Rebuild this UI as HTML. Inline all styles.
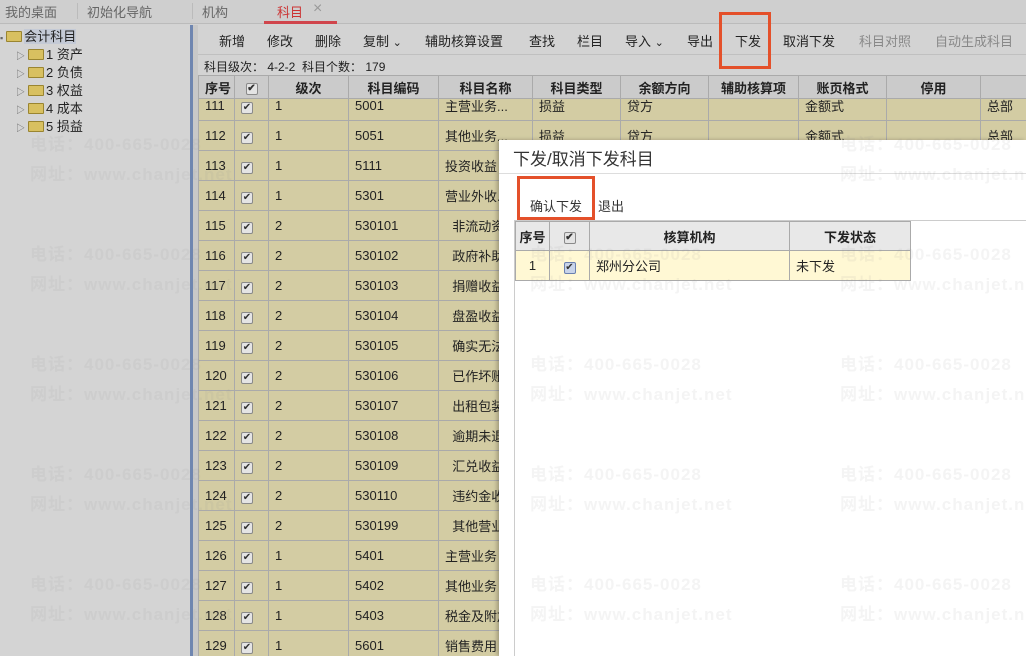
<!DOCTYPE html>
<html><head><meta charset="utf-8"><style>
*{margin:0;padding:0;box-sizing:border-box}
body{width:1026px;height:656px;overflow:hidden;position:relative;background:#d3d3d3;font-family:"Liberation Sans","Noto Sans CJK SC",sans-serif;font-size:13px;color:#222}
.a{position:absolute;white-space:nowrap}
.wm{position:absolute;color:rgba(150,150,150,.1);font-size:17px;font-weight:bold;white-space:nowrap;letter-spacing:1px}
.cb{display:inline-block;width:12px;height:12px;border:1px solid #8a8a8a;border-radius:2px;background:#e4e4e4;font-size:10px;line-height:10px;text-align:center;color:#333}
table{border-collapse:collapse;table-layout:fixed}
td{border:1px solid #aaa;height:30px;padding:0 6px;overflow:hidden;white-space:nowrap}
.hd td{background:#cbcbcb;font-weight:bold;text-align:center;height:23px}
.tb span{position:absolute;top:31px}
.fold{display:inline-block;width:16px;height:11px;background:#d8c060;border:1px solid #9a8530;border-radius:1px;vertical-align:-1px;margin-right:2px}
.tg{font-size:9px;color:#666;margin-right:3px}
</style></head><body>
<div class="a" style="left:0;top:0;width:1026px;height:24px;background:#cfcfcf;border-bottom:1px solid #bbb"></div>
<div class="a" style="left:5px;top:2px;color:#666">我的桌面</div>
<div class="a" style="left:77px;top:3px;width:1px;height:16px;background:#bbb"></div>
<div class="a" style="left:87px;top:2px;color:#666">初始化导航</div>
<div class="a" style="left:192px;top:3px;width:1px;height:16px;background:#bbb"></div>
<div class="a" style="left:202px;top:2px;color:#666">机构</div>
<div class="a" style="left:277px;top:2px;color:#c33">科目</div>
<div class="a" style="left:313px;top:0px;color:#999;font-size:16px">×</div>
<div class="a" style="left:264px;top:21px;width:73px;height:3px;background:#d0454c"></div>
<div class="a" style="left:0;top:25px;width:190px;height:631px;background:#d4d4d4"></div>
<div class="a" style="left:0;top:26px"><span class="tg">▪</span><span class="fold"></span><span style="background:#c4cad6">会计科目</span></div>
<div class="a" style="left:16px;top:44px"><span class="tg">▷</span><span class="fold"></span>1 资产</div>
<div class="a" style="left:16px;top:62px"><span class="tg">▷</span><span class="fold"></span>2 负债</div>
<div class="a" style="left:16px;top:80px"><span class="tg">▷</span><span class="fold"></span>3 权益</div>
<div class="a" style="left:16px;top:98px"><span class="tg">▷</span><span class="fold"></span>4 成本</div>
<div class="a" style="left:16px;top:116px"><span class="tg">▷</span><span class="fold"></span>5 损益</div>
<div class="a" style="left:190px;top:25px;width:3px;height:631px;background:#6f86b0"></div>
<div class="a" style="left:193px;top:25px;width:5px;height:631px;background:#c8c8c8"></div>
<div class="a" style="left:198px;top:25px;width:828px;height:30px;background:#d3d3d3;border-bottom:1px solid #c0c0c0"></div>
<div class="tb" style="font-size:13px">
<span style="left:219px">新增</span><span style="left:267px">修改</span><span style="left:315px">删除</span><span style="left:363px">复制 <small>⌄</small></span><span style="left:425px">辅助核算设置</span><span style="left:529px">查找</span><span style="left:577px">栏目</span><span style="left:625px">导入 <small>⌄</small></span><span style="left:687px">导出</span><span style="left:735px">下发</span><span style="left:783px">取消下发</span><span style="left:859px;color:#888">科目对照</span><span style="left:935px;color:#888">自动生成科目</span>
</div>
<div class="a" style="left:719px;top:12px;width:52px;height:57px;border:3px solid #e4502a"></div>
<div class="a" style="left:204px;top:58px;font-size:12px">科目级次： 4-2-2 &nbsp;科目个数： 179</div>
<div class="a" style="left:198px;top:75px;width:828px;height:581px;overflow:hidden;background:#d3cca3">
<table style="width:850px;position:absolute;top:0;left:0">
<colgroup><col style="width:36px"><col style="width:34px"><col style="width:80px"><col style="width:90px"><col style="width:94px"><col style="width:88px"><col style="width:88px"><col style="width:90px"><col style="width:88px"><col style="width:94px"><col style="width:68px"></colgroup>
<tr class="hd"><td>序号</td><td><span class="cb">✔</span></td><td>级次</td><td>科目编码</td><td>科目名称</td><td>科目类型</td><td>余额方向</td><td>辅助核算项</td><td>账页格式</td><td>停用</td><td></td></tr>
</table>
<div style="position:absolute;top:23px;left:0;height:558px;width:850px;overflow:hidden">
<table style="width:850px;position:absolute;top:-8px;left:0">
<colgroup><col style="width:36px"><col style="width:34px"><col style="width:80px"><col style="width:90px"><col style="width:94px"><col style="width:88px"><col style="width:88px"><col style="width:90px"><col style="width:88px"><col style="width:94px"><col style="width:68px"></colgroup>
<tr><td>111</td><td><span class="cb">✔</span></td><td>1</td><td>5001</td><td>主营业务...</td><td>损益</td><td>贷方</td><td></td><td>金额式</td><td></td><td>总部</td></tr>
<tr><td>112</td><td><span class="cb">✔</span></td><td>1</td><td>5051</td><td>其他业务...</td><td>损益</td><td>贷方</td><td></td><td>金额式</td><td></td><td>总部</td></tr>
<tr><td>113</td><td><span class="cb">✔</span></td><td>1</td><td>5111</td><td>投资收益</td><td></td><td></td><td></td><td></td><td></td><td></td></tr>
<tr><td>114</td><td><span class="cb">✔</span></td><td>1</td><td>5301</td><td>营业外收...</td><td></td><td></td><td></td><td></td><td></td><td></td></tr>
<tr><td>115</td><td><span class="cb">✔</span></td><td>2</td><td>530101</td><td>&nbsp;&nbsp;非流动资</td><td></td><td></td><td></td><td></td><td></td><td></td></tr>
<tr><td>116</td><td><span class="cb">✔</span></td><td>2</td><td>530102</td><td>&nbsp;&nbsp;政府补助</td><td></td><td></td><td></td><td></td><td></td><td></td></tr>
<tr><td>117</td><td><span class="cb">✔</span></td><td>2</td><td>530103</td><td>&nbsp;&nbsp;捐赠收益</td><td></td><td></td><td></td><td></td><td></td><td></td></tr>
<tr><td>118</td><td><span class="cb">✔</span></td><td>2</td><td>530104</td><td>&nbsp;&nbsp;盘盈收益</td><td></td><td></td><td></td><td></td><td></td><td></td></tr>
<tr><td>119</td><td><span class="cb">✔</span></td><td>2</td><td>530105</td><td>&nbsp;&nbsp;确实无法</td><td></td><td></td><td></td><td></td><td></td><td></td></tr>
<tr><td>120</td><td><span class="cb">✔</span></td><td>2</td><td>530106</td><td>&nbsp;&nbsp;已作坏账</td><td></td><td></td><td></td><td></td><td></td><td></td></tr>
<tr><td>121</td><td><span class="cb">✔</span></td><td>2</td><td>530107</td><td>&nbsp;&nbsp;出租包装</td><td></td><td></td><td></td><td></td><td></td><td></td></tr>
<tr><td>122</td><td><span class="cb">✔</span></td><td>2</td><td>530108</td><td>&nbsp;&nbsp;逾期未退</td><td></td><td></td><td></td><td></td><td></td><td></td></tr>
<tr><td>123</td><td><span class="cb">✔</span></td><td>2</td><td>530109</td><td>&nbsp;&nbsp;汇兑收益</td><td></td><td></td><td></td><td></td><td></td><td></td></tr>
<tr><td>124</td><td><span class="cb">✔</span></td><td>2</td><td>530110</td><td>&nbsp;&nbsp;违约金收</td><td></td><td></td><td></td><td></td><td></td><td></td></tr>
<tr><td>125</td><td><span class="cb">✔</span></td><td>2</td><td>530199</td><td>&nbsp;&nbsp;其他营业</td><td></td><td></td><td></td><td></td><td></td><td></td></tr>
<tr><td>126</td><td><span class="cb">✔</span></td><td>1</td><td>5401</td><td>主营业务</td><td></td><td></td><td></td><td></td><td></td><td></td></tr>
<tr><td>127</td><td><span class="cb">✔</span></td><td>1</td><td>5402</td><td>其他业务</td><td></td><td></td><td></td><td></td><td></td><td></td></tr>
<tr><td>128</td><td><span class="cb">✔</span></td><td>1</td><td>5403</td><td>税金及附加</td><td></td><td></td><td></td><td></td><td></td><td></td></tr>
<tr><td>129</td><td><span class="cb">✔</span></td><td>1</td><td>5601</td><td>销售费用</td><td></td><td></td><td></td><td></td><td></td><td></td></tr>
</table></div></div>
<div class="a" style="left:499px;top:140px;width:527px;height:516px;background:#fff;box-shadow:-2px 0 4px rgba(0,0,0,.25)"></div>
<div class="a" style="left:513px;top:145px;font-size:17px;color:#333">下发/取消下发科目</div>
<div class="a" style="left:499px;top:173px;width:527px;height:1px;background:#ddd"></div>
<div class="a" style="left:530px;top:196px;color:#333">确认下发</div>
<div class="a" style="left:598px;top:196px;color:#333">退出</div>
<div class="a" style="left:517px;top:176px;width:78px;height:44px;border:3px solid #e4502a"></div>
<div class="a" style="left:514px;top:220px;width:512px;height:1px;background:#ccc"></div>
<div class="a" style="left:514px;top:220px;width:1px;height:436px;background:#ccc"></div>
<table class="a" style="left:515px;top:221px;width:395px">
<colgroup><col style="width:34px"><col style="width:40px"><col style="width:200px"><col style="width:121px"></colgroup>
<tr class="hd"><td style="height:29px;background:#e8e8e8;padding:0">序号</td><td style="background:#e8e8e8"><span class="cb">✔</span></td><td style="background:#e8e8e8">核算机构</td><td style="background:#e8e8e8">下发状态</td></tr>
<tr style="background:#fff8d4"><td style="text-align:center;padding:0">1</td><td style="text-align:center"><span class="cb" style="background:#c8d4ea;border-color:#6a80b0">✔</span></td><td>郑州分公司</td><td>未下发</td></tr>
</table>
<div class="wm" style="left:30px;top:130px">电话：400-665-0028</div><div class="wm" style="left:30px;top:160px">网址：www.chanjet.net</div>
<div class="wm" style="left:530px;top:240px">电话：400-665-0028</div><div class="wm" style="left:530px;top:270px">网址：www.chanjet.net</div>
<div class="wm" style="left:840px;top:240px">电话：400-665-0028</div><div class="wm" style="left:840px;top:270px">网址：www.chanjet.net</div>
<div class="wm" style="left:30px;top:240px">电话：400-665-0028</div><div class="wm" style="left:30px;top:270px">网址：www.chanjet.net</div>
<div class="wm" style="left:530px;top:350px">电话：400-665-0028</div><div class="wm" style="left:530px;top:380px">网址：www.chanjet.net</div>
<div class="wm" style="left:840px;top:350px">电话：400-665-0028</div><div class="wm" style="left:840px;top:380px">网址：www.chanjet.net</div>
<div class="wm" style="left:30px;top:350px">电话：400-665-0028</div><div class="wm" style="left:30px;top:380px">网址：www.chanjet.net</div>
<div class="wm" style="left:530px;top:460px">电话：400-665-0028</div><div class="wm" style="left:530px;top:490px">网址：www.chanjet.net</div>
<div class="wm" style="left:840px;top:460px">电话：400-665-0028</div><div class="wm" style="left:840px;top:490px">网址：www.chanjet.net</div>
<div class="wm" style="left:30px;top:460px">电话：400-665-0028</div><div class="wm" style="left:30px;top:490px">网址：www.chanjet.net</div>
<div class="wm" style="left:530px;top:570px">电话：400-665-0028</div><div class="wm" style="left:530px;top:600px">网址：www.chanjet.net</div>
<div class="wm" style="left:840px;top:570px">电话：400-665-0028</div><div class="wm" style="left:840px;top:600px">网址：www.chanjet.net</div>
<div class="wm" style="left:30px;top:570px">电话：400-665-0028</div><div class="wm" style="left:30px;top:600px">网址：www.chanjet.net</div>
<div class="wm" style="left:840px;top:130px">电话：400-665-0028</div><div class="wm" style="left:840px;top:160px">网址：www.chanjet.net</div>
</body></html>
